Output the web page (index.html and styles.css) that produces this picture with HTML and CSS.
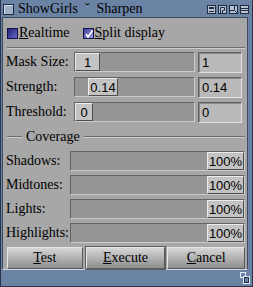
FILE: index.html
```html
<!DOCTYPE html>
<html lang="en">
<head>
	<meta charset="UTF-8">
	<title>ShowGirls - Sharpen</title>
	<link rel="stylesheet" href="styles.css">
</head>
<body>
	<div class="window">
		<div class="titlebar">
			<span class="close"></span>
			<span class="title">ShowGirls &nbsp;ˇ &nbsp;Sharpen</span>
			<span class="gadgets">
				<svg width="9" height="9" viewBox="0 0 9 9"><rect x="0.5" y="0.5" width="8" height="8" fill="#b7c3d3" stroke="#1f2b42"/><rect x="2" y="2" width="5" height="2" fill="#1f2b42"/><rect x="2" y="6" width="5" height="1" fill="#1f2b42"/></svg>
				<svg width="9" height="9" viewBox="0 0 9 9"><rect x="0.5" y="0.5" width="8" height="8" fill="#b7c3d3" stroke="#1f2b42"/><path d="M2.5 8V2.5H6.5V5.5H4.5V8" fill="none" stroke="#1f2b42"/></svg>
				<svg width="9" height="9" viewBox="0 0 9 9"><rect x="0.5" y="0.5" width="8" height="8" fill="#b7c3d3" stroke="#1f2b42"/><path d="M5.5 1V5.5H1M5.5 5.5L8 8" fill="none" stroke="#1f2b42"/></svg>
				<svg width="9" height="9" viewBox="0 0 9 9"><rect x="0.5" y="0.5" width="8" height="8" fill="#b7c3d3" stroke="#1f2b42"/><rect x="1" y="3" width="7" height="1" fill="#1f2b42"/><rect x="1" y="5" width="7" height="1" fill="#1f2b42"/></svg>
			</span>
		</div>

		<div class="client">
			<div class="checks">
				<label class="check"><span class="box"></span><u>R</u>ealtime</label>
				<label class="check"><span class="box on"><svg width="10" height="10" viewBox="0 0 10 10"><path d="M2 5L4 8L8.5 1.5" fill="none" stroke="#fff" stroke-width="1.6"/></svg></span><u>S</u>plit display</label>
			</div>

			<div class="sep"></div>

			<div class="sliders">
				<span class="label">Mask Size:</span>
				<div class="trough"><span class="handle" style="margin-left:0;width:25px">1</span></div>
				<div class="field">1</div>

				<span class="label">Strength:</span>
				<div class="trough"><span class="handle" style="margin-left:13px;width:30px">0.14</span></div>
				<div class="field">0.14</div>

				<span class="label">Threshold:</span>
				<div class="trough"><span class="handle" style="margin-left:0;width:18px">0</span></div>
				<div class="field">0</div>
			</div>

			<div class="group">
				<span class="line short"></span>
				<span class="group-title">Coverage</span>
				<span class="line"></span>
			</div>

			<div class="coverage">
				<span class="label">Shadows:</span>
				<div class="trough full"><span class="handle">100%</span></div>
				<span class="label">Midtones:</span>
				<div class="trough full"><span class="handle">100%</span></div>
				<span class="label">Lights:</span>
				<div class="trough full"><span class="handle">100%</span></div>
				<span class="label">Highlights:</span>
				<div class="trough full"><span class="handle">100%</span></div>
			</div>

			<div class="buttons">
				<button class="btn test"><u>T</u>est</button>
				<button class="btn execute"><u>E</u>xecute</button>
				<button class="btn cancel"><u>C</u>ancel</button>
			</div>
		</div>

		<div class="statusbar">
			<svg class="resize" width="10" height="12" viewBox="0 0 10 12"><rect x="0.5" y="0.5" width="5" height="5" fill="#6a83a4" stroke="#e4ebf4"/><rect x="3.5" y="4.5" width="6" height="7" fill="#6a83a4" stroke="#e4ebf4"/><rect x="4.5" y="5.5" width="4" height="5" fill="none" stroke="#1f2b42"/></svg>
		</div>
	</div>
</body>
</html>
```

FILE: styles.css
```css
*{
	margin: 0;
	padding: 0;
	box-sizing: border-box;
}
body{
	background: #fff;
}
.window{
	display: flex;
	flex-direction: column;
	width: 253px;
	height: 287px;
	background: #6a83a4;
	border: 1px solid #27344a;
	border-top: none;
	font-family: "Liberation Serif", "Times New Roman", serif;
	font-size: 14px;
	color: #000;
}
.titlebar{
	display: flex;
	align-items: center;
	height: 18px;
	padding: 0 3px 0 2px;
}
.close{
	width: 11px;
	height: 11px;
	margin-top: 1px;
	border: 1px solid #1f2b42;
	background: #9fb0c6;
	box-shadow: inset 1px 1px 0 #d6dee9;
}
.title{
	flex: 1;
	margin-left: 4px;
	white-space: nowrap;
}
.gadgets{
	display: flex;
	gap: 2px;
	margin-top: 1px;
}
.gadgets svg{
	display: block;
}
.client{
	flex: 1;
	display: flex;
	flex-direction: column;
	margin: 0 4px 0 1px;
	padding: 0 2px 0 3px;
	background: #a7a7a7;
	border: 1px solid #3e4b60;
	border-bottom-color: #d2d8e0;
}
.checks{
	display: flex;
	align-items: center;
	height: 16px;
	margin-top: 7px;
	padding-left: 1px;
}
.check{
	display: flex;
	align-items: center;
	margin-right: 13px;
}
.box{
	width: 11px;
	height: 11px;
	margin-right: 1px;
	border: 1px solid #12124a;
	background: linear-gradient(135deg, #20207a, #6a6ac8);
}
.box.on{
	background: linear-gradient(135deg, #4040a0, #9a9ae0);
}
.box svg{
	display: block;
}
.sep{
	height: 2px;
	margin: 6px 0 0 1px;
	border-top: 1px solid #6e6e6e;
	border-bottom: 1px solid #cdcdcd;
}
.sliders{
	display: grid;
	grid-template-columns: 68px 121px 47px;
	column-gap: 0;
	row-gap: 4px;
	margin-top: 3px;
}
.sliders .field{
	margin-left: 3px;
}
.label{
	display: flex;
	align-items: center;
	height: 20px;
	white-space: nowrap;
}
.trough{
	display: flex;
	height: 20px;
	background: #959595;
	border: 1px solid;
	border-color: #646464 #cacaca #cacaca #646464;
}
.trough.full{
	justify-content: flex-end;
}
.handle{
	display: flex;
	align-items: center;
	justify-content: center;
	height: 100%;
	background: #c3c3c3;
	border: 1px solid;
	border-color: #ececec #4e4e4e #4e4e4e #ececec;
	font-family: "Liberation Sans", Arial, sans-serif;
	font-size: 13px;
}
.trough.full .handle{
	width: 37px;
}
.field{
	display: flex;
	align-items: center;
	height: 21px;
	padding-left: 3px;
	background: #bababa;
	border: 1px solid;
	border-color: #5e5e5e #e2e2e2 #e2e2e2 #5e5e5e;
	box-shadow: inset 1px 1px 0 #8a8a8a;
	font-family: "Liberation Sans", Arial, sans-serif;
	font-size: 13px;
}
.group{
	display: flex;
	align-items: center;
	height: 16px;
	margin-top: 6px;
	padding-left: 1px;
}
.line{
	flex: 1;
	height: 2px;
	border-top: 1px solid #6e6e6e;
	border-bottom: 1px solid #cdcdcd;
}
.line.short{
	flex: none;
	width: 15px;
}
.group-title{
	padding: 0 4px;
}
.coverage{
	display: grid;
	grid-template-columns: 64px 175px;
	row-gap: 4px;
	margin-top: 6px;
}
.buttons{
	display: flex;
	height: 22px;
	margin: 4px 0 0 1px;
}
.btn{
	height: 22px;
	font-family: "Liberation Serif", "Times New Roman", serif;
	font-size: 14px;
	color: #000;
	background: linear-gradient(#d6d6d6, #8e8e8e);
	border: 1px solid;
	border-color: #e6e6e6 #5a5a5a #5a5a5a #e6e6e6;
}
.test{
	width: 76px;
}
.execute{
	width: 80px;
	margin-left: 3px;
	outline: 1px solid #5e5e5e;
}
.cancel{
	width: 78px;
	margin-left: 2px;
}
.statusbar{
	display: flex;
	justify-content: flex-end;
	align-items: center;
	height: 16px;
	padding-right: 2px;
}
.resize{
	display: block;
}
```
